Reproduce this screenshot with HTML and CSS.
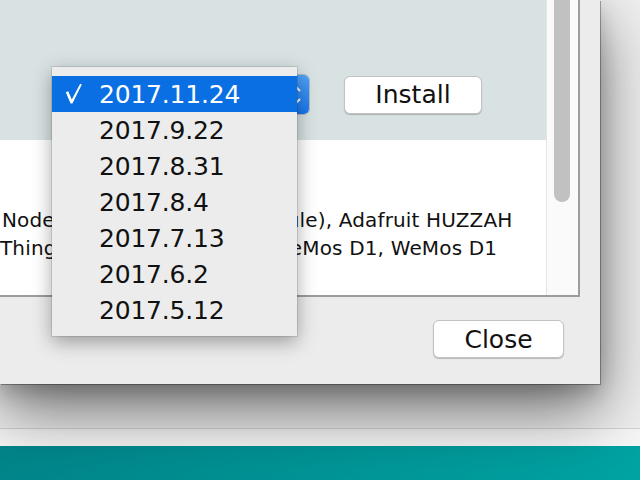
FILE: index.html
```html
<!DOCTYPE html>
<html lang="en">
<head>
    <meta charset="UTF-8">
    <meta name="viewport" content="width=device-width, initial-scale=1.0">
    <title>Boards Manager</title>
    <link rel="stylesheet" href="styles.css">
</head>
<body>
    <div class="desktop">
        <!-- main window behind the dialog -->
        <div class="main-window">
            <div class="editor"></div>
            <div class="status-strip"></div>
            <div class="console-bar"></div>
        </div>

        <!-- Boards Manager dialog -->
        <div class="dialog">
            <div class="list-panel">
                <div class="list-rows">
                    <div class="row row-selected">
                        <div class="row-actions">
                            <div class="version-select">
                                <span class="select-value">2017.11.24</span>
                                <span class="select-arrows">
                                    <svg width="12" height="22" viewBox="0 0 12 22">
                                        <polyline points="2,7 6,3 10,7" fill="none" stroke="#fff" stroke-width="2"/>
                                        <polyline points="2,15 6,19 10,15" fill="none" stroke="#fff" stroke-width="2"/>
                                    </svg>
                                </span>
                            </div>
                            <button class="btn btn-install">Install</button>
                        </div>
                    </div>
                    <div class="row row-info">
                        <div class="board-line first">NodeMCU 1.0 (ESP-12E Module), Adafruit HUZZAH</div>
                        <div class="board-line second">Thing, SweetPea ESP-210, WeMos D1, WeMos D1</div>
                    </div>
                </div>
                <div class="scrollbar">
                    <div class="scroll-thumb"></div>
                </div>
            </div>
            <div class="dialog-footer">
                <button class="btn btn-close">Close</button>
            </div>
        </div>

        <!-- open version dropdown -->
        <ul class="popup-menu">
            <li class="menu-item active">
                <svg class="check" width="18" height="22" viewBox="0 0 18 22">
                    <path d="M0.8 9.2 L3.2 8.2 L6.8 16.4 L15.2 0.8 L16.8 1.6 L7.4 20.4 L5.6 20.4 Z" fill="#fff"/>
                </svg>
                2017.11.24
            </li>
            <li class="menu-item">2017.9.22</li>
            <li class="menu-item">2017.8.31</li>
            <li class="menu-item">2017.8.4</li>
            <li class="menu-item">2017.7.13</li>
            <li class="menu-item">2017.6.2</li>
            <li class="menu-item">2017.5.12</li>
        </ul>
    </div>
</body>
</html>
```

FILE: styles.css
```css
body {
    margin: 0;
    font-family: "DejaVu Sans", sans-serif;
    color: #111;
    overflow: hidden;
}
.desktop {
    position: relative;
    width: 640px;
    height: 480px;
    overflow: hidden;
}
.main-window {
    display: flex;
    flex-direction: column;
    height: 100%;
    background-color: #efefef;
}
.editor {
    flex: 1;
}
.status-strip {
    height: 17px;
    border-top: 1px solid #d4d4d4;
    background-color: #f6f6f6;
}
.console-bar {
    height: 34px;
    background: linear-gradient(90deg, #00868a, #00a3a3);
}

/* dialog */
.dialog {
    position: absolute;
    left: 0;
    top: 0;
    width: 600px;
    height: 384px;
    display: flex;
    flex-direction: column;
    background-color: #ececec;
    box-shadow: 1px 1px 0 rgba(0, 0, 0, 0.3), 0 8px 18px rgba(0, 0, 0, 0.18), 0 26px 60px rgba(0, 0, 0, 0.55);
}
.list-panel {
    display: flex;
    width: 580px;
    height: 297px;
    box-sizing: border-box;
    border-right: 2px solid #9c9c9c;
    border-bottom: 2px solid #9c9c9c;
    background-color: #fff;
}
.list-rows {
    flex: 1;
    overflow: hidden;
}
.row-selected {
    height: 140px;
    box-sizing: border-box;
    display: flex;
    align-items: flex-end;
    padding: 0 0 25px 60px;
    background-color: #d8e2e2;
}
.row-actions {
    display: flex;
    align-items: center;
    gap: 34px;
}
.version-select {
    width: 250px;
    height: 41px;
    box-sizing: border-box;
    display: flex;
    align-items: center;
    justify-content: space-between;
    border: 1px solid #b8b8b8;
    border-radius: 6px;
    background-color: #fff;
    overflow: hidden;
    font-size: 22px;
}
.select-value {
    padding-left: 10px;
}
.select-arrows {
    width: 26px;
    height: 100%;
    display: flex;
    align-items: center;
    justify-content: center;
    background: linear-gradient(#4fa3fa, #1677ef);
}
.btn {
    font-family: "DejaVu Sans", sans-serif;
    font-size: 25px;
    color: #111;
    background-color: #fff;
    border: 1px solid #c2c2c2;
    border-radius: 6px;
    box-shadow: 0 1px 1px rgba(0, 0, 0, 0.22);
    padding: 0;
}
.btn-install {
    width: 138px;
    height: 38px;
}
.row-info {
    padding: 66px 0 0 2px;
    font-size: 20px;
    line-height: 28px;
    letter-spacing: 0.15px;
}
.board-line {
    white-space: nowrap;
}
.board-line.second {
    margin-left: -2px;
}
.scrollbar {
    width: 32px;
    box-sizing: border-box;
    padding: 0 8px 0 7px;
    border-left: 1px solid #e4e4e4;
    background-color: #fafafa;
}
.scroll-thumb {
    height: 202px;
    border-radius: 0 0 8px 8px;
    background-color: #c1c1c1;
}
.dialog-footer {
    flex: 1;
    display: flex;
    justify-content: flex-end;
    align-items: flex-start;
    padding: 23px 36px 0 0;
}
.btn-close {
    width: 131px;
    height: 38px;
}

/* dropdown */
.popup-menu {
    position: absolute;
    left: 52px;
    top: 67px;
    width: 245px;
    margin: 0;
    padding: 9px 0 8px;
    list-style: none;
    background-color: #ececec;
    box-shadow: 0 0 0 1px rgba(0, 0, 0, 0.1), 0 6px 18px rgba(0, 0, 0, 0.35);
}
.menu-item {
    position: relative;
    height: 36px;
    display: flex;
    align-items: center;
    padding-left: 47px;
    font-size: 25px;
    letter-spacing: -0.2px;
    color: #111;
}
.menu-item.active {
    background-color: #0a6fe3;
    color: #fff;
}
.check {
    position: absolute;
    left: 13px;
    top: 7px;
}
```
